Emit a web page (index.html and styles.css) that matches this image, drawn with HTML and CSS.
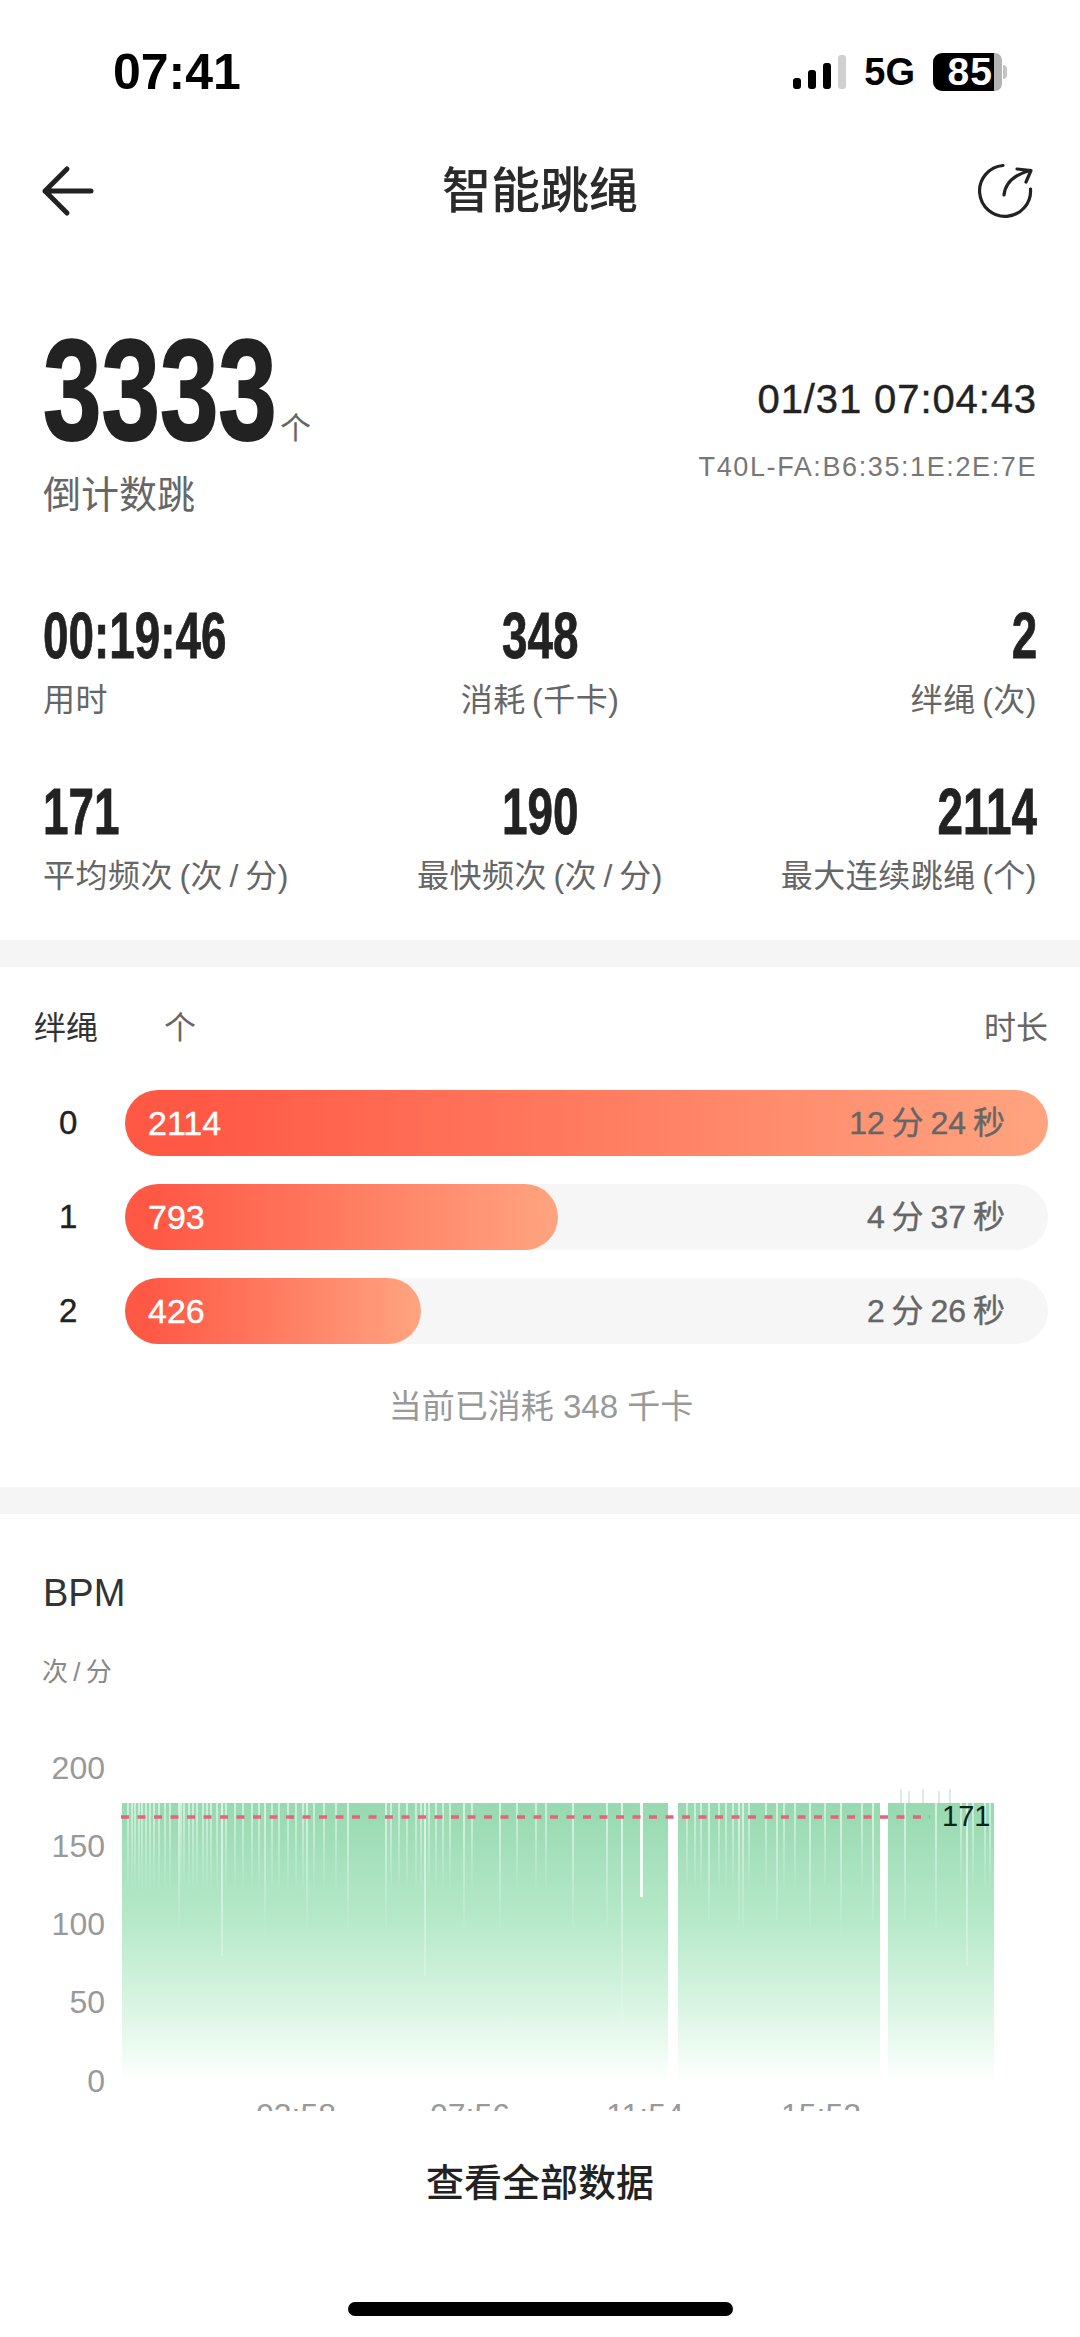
FILE: index.html
```html
<!DOCTYPE html>
<html lang="zh-CN">
<head>
<meta charset="utf-8">
<title>智能跳绳</title>
<link rel="stylesheet" href="styles.css">
</head>
<body>
<div class="page">
  <div class="status">
    <span class="time">07:41</span>
    <div class="status-right">
      <svg class="signal" width="54" height="36" viewBox="0 0 54 36"><rect x="0" y="24" width="8" height="11" rx="3" fill="#000"/><rect x="15" y="16" width="8" height="19" rx="3" fill="#000"/><rect x="30" y="9" width="8" height="26" rx="3" fill="#000"/><rect x="45" y="1" width="8" height="34" rx="3" fill="#d0d0d0"/></svg>
      <span class="net">5G</span>
      <div class="battery"><span class="batt-level">85</span><span class="batt-rest"></span><span class="batt-knob"></span></div>
    </div>
  </div>

  <div class="nav">
    <svg class="nav-icon" width="60" height="60" viewBox="0 0 60 60"><path d="M52 30H6M28 8 6 30l22 22" fill="none" stroke="#222" stroke-width="5" stroke-linecap="round" stroke-linejoin="round"/></svg>
    <span class="nav-title">智能跳绳</span>
    <svg class="nav-icon" width="60" height="60" viewBox="0 0 60 60"><path d="M26 4.500A25.500 25.500 0 1 0 53.500 28" fill="none" stroke="#222" stroke-width="3.2" stroke-linecap="round"/><path d="M27 34Q29 16 53 9.500M40 8l14 1.500L49 21" fill="none" stroke="#222" stroke-width="3.2" stroke-linecap="round" stroke-linejoin="round"/></svg>
  </div>

  <div class="hero">
    <div>
      <div class="hero-count"><span class="big-num">3333</span><span class="hero-unit">个</span></div>
      <div class="hero-label">倒计数跳</div>
    </div>
    <div class="hero-meta">
      <div class="hero-date">01/31 07:04:43</div>
      <div class="hero-device">T40L-FA:B6:35:1E:2E:7E</div>
    </div>
  </div>

  <div class="stats">
    <div class="stat start"><span class="num">00:19:46</span><span class="stat-label">用时</span></div>
    <div class="stat middle"><span class="num">348</span><span class="stat-label">消耗 (千卡)</span></div>
    <div class="stat end"><span class="num">2</span><span class="stat-label">绊绳 (次)</span></div>
    <div class="stat start"><span class="num">171</span><span class="stat-label">平均频次 (次 / 分)</span></div>
    <div class="stat middle"><span class="num">190</span><span class="stat-label">最快频次 (次 / 分)</span></div>
    <div class="stat end"><span class="num">2114</span><span class="stat-label">最大连续跳绳 (个)</span></div>
  </div>

  <div class="divider"></div>

  <div class="rounds">
    <div class="rounds-head">
      <span class="rounds-title">绊绳</span>
      <span class="rounds-unit">个</span>
      <span class="rounds-dur">时长</span>
    </div>
    <div class="round-list">
      <div class="round">
        <span class="round-index">0</span>
        <div class="track"><div class="fill" style="width:100%"><span>2114</span></div><span class="dur">12 分 24 秒</span></div>
      </div>
      <div class="round">
        <span class="round-index">1</span>
        <div class="track"><div class="fill" style="width:46.9%"><span>793</span></div><span class="dur">4 分 37 秒</span></div>
      </div>
      <div class="round">
        <span class="round-index">2</span>
        <div class="track"><div class="fill" style="width:32.1%"><span>426</span></div><span class="dur">2 分 26 秒</span></div>
      </div>
    </div>
    <div class="rounds-foot">当前已消耗 348 千卡</div>
  </div>

  <div class="divider"></div>

  <div class="bpm">
    <div class="bpm-title">BPM</div>
    <div class="bpm-unit">次 / 分</div>
    <svg class="chart" width="1080" height="370" viewBox="0 1740 1080 370">
      <defs>
        <linearGradient id="area" gradientUnits="userSpaceOnUse" x1="0" y1="1802" x2="0" y2="2082">
          <stop offset="0" stop-color="#97d9b0"/>
          <stop offset=".16" stop-color="#a3dfba"/>
          <stop offset=".42" stop-color="#b6e9c9"/>
          <stop offset=".7" stop-color="#d6f4e1"/>
          <stop offset=".88" stop-color="#eefbf2"/>
          <stop offset="1" stop-color="#fff"/>
        </linearGradient>
        <linearGradient id="shortfade" gradientUnits="userSpaceOnUse" x1="0" y1="1802" x2="0" y2="1892">
          <stop offset="0" stop-color="#fff" stop-opacity=".75"/>
          <stop offset="1" stop-color="#fff" stop-opacity="0"/>
        </linearGradient>
        <linearGradient id="midfade" gradientUnits="userSpaceOnUse" x1="0" y1="1802" x2="0" y2="1935">
          <stop offset="0" stop-color="#fff" stop-opacity=".85"/>
          <stop offset="1" stop-color="#fff" stop-opacity="0"/>
        </linearGradient>
        <linearGradient id="longfade" gradientUnits="userSpaceOnUse" x1="0" y1="1802" x2="0" y2="2040">
          <stop offset="0" stop-color="#fff" stop-opacity=".9"/>
          <stop offset="1" stop-color="#fff" stop-opacity="0"/>
        </linearGradient>
      </defs>
      <g class="axis-y">
        <text x="105" y="1778">200</text>
        <text x="105" y="1856">150</text>
        <text x="105" y="1934">100</text>
        <text x="105" y="2012">50</text>
        <text x="105" y="2091">0</text>
      </g>
      <g class="spikes"><path d="M901 1788V1802M909 1790V1802M923 1788V1802M939 1790V1802M950 1788V1802"/></g>
      <path d="M122 1802H668V2082H122ZM678 1802H880V2082H678ZM888 1802H994V2082H888Z" fill="url(#area)"/>
      <path class="gap-short" d="M128 1802V1890M132 1802V1890M135 1802V1890M139 1802V1890M142 1802V1890M146 1802V1890M150 1802V1890M154 1802V1890M159 1802V1890M165 1802V1890M170 1802V1890M181 1802V1890M184 1802V1890M189 1802V1890M193 1802V1890M197 1802V1890M203 1802V1890M207 1802V1890M211 1802V1890M217 1802V1890M226 1802V1890M235 1802V1890M243 1802V1890M252 1802V1890M259 1802V1890M272 1802V1890M279 1802V1890M288 1802V1890M296 1802V1890M303 1802V1890M314 1802V1890M324 1802V1890M336 1802V1890M391 1802V1890M399 1802V1890M407 1802V1890M416 1802V1890M421 1802V1890M429 1802V1890M436 1802V1890M443 1802V1890M450 1802V1890M472 1802V1890M517 1802V1890M536 1802V1890M546 1802V1890M687 1802V1890M695 1802V1890M701 1802V1890M719 1802V1890M726 1802V1890M733 1802V1890M749 1802V1890M766 1802V1890M784 1802V1890M795 1802V1890M825 1802V1890M862 1802V1890M961 1802V1890M973 1802V1890M985 1802V1890M990 1802V1890"/>
      <path class="gap-mid" d="M179 1802V1925M265 1802V1935M307 1802V1925M348 1802V1930M386 1802V1925M464 1802V1925M500 1802V1930M573 1802V1925M607 1802V1925M709 1802V1920M739 1802V1920M743 1802V1925M777 1802V1920M810 1802V1925M841 1802V1935M873 1802V1920M905 1802V1920M936 1802V1930"/>
      <path class="gap-long" d="M222 1802V1955M425 1802V1975M622 1802V2030M967 1802V1965"/>
      <rect class="gap-solid" x="640" y="1802" width="3" height="94"/>
      <line class="mean-line" x1="121" y1="1816" x2="930" y2="1816"/>
      <text class="mean-label" x="942" y="1825">171</text>
      <g class="axis-x">
        <text x="296" y="2125">03:58</text>
        <text x="470" y="2125">07:56</text>
        <text x="645" y="2125">11:54</text>
        <text x="821" y="2125">15:52</text>
      </g>
    </svg>
  </div>

  <div class="view-all">查看全部数据</div>
  <div class="home-bar"></div>
</div>
</body>
</html>
```
FILE: styles.css
```css
* { box-sizing: border-box; }
html, body { margin: 0; padding: 0; background: #fff; }
body { font-family: "Liberation Sans", "Noto Sans CJK SC", sans-serif; color: #222; }
.page { width: 1080px; height: 2337px; overflow: hidden; }

.status { height: 144px; padding: 0 73px 0 113px; display: flex; justify-content: space-between; align-items: center; }
.time { font-size: 50px; font-weight: 700; color: #000; line-height: 1; }
.status-right { display: flex; align-items: center; }
.signal { display: block; margin-right: 17px; }
.net { font-size: 38px; font-weight: 700; color: #000; line-height: 1; margin-right: 18px; }
.battery { display: flex; align-items: center; height: 38px; }
.batt-level { width: 61px; height: 38px; background: #000; color: #fff; font-size: 39px; font-weight: 700; line-height: 38px; text-align: right; letter-spacing: 1px; border-radius: 9px 0 0 9px; padding-right: 1px; }
.batt-rest { width: 8px; height: 38px; background: #b4b4b4; border-radius: 0 7px 7px 0; }
.batt-knob { width: 4px; height: 14px; background: #c4c4c4; border-radius: 0 4px 4px 0; margin-left: 1px; }

.nav { height: 94px; padding: 0 43px 0 39px; display: flex; justify-content: space-between; align-items: center; }
.nav-icon { display: block; }
.nav-title { margin-left: 4px; font-size: 49px; font-weight: 500; line-height: 60px; color: #2a2a2a; }

.hero { padding: 87px 43px 0; display: flex; justify-content: space-between; align-items: flex-start; }
.hero-count { display: flex; align-items: flex-end; height: 130px; }
.big-num { font-weight: 700; font-size: 143px; line-height: 130px; width: 237px; display: inline-block; white-space: nowrap; transform: scaleX(.735); transform-origin: left center; color: #222; -webkit-text-stroke: 2px #222; }
.hero-unit { font-size: 31px; line-height: 44px; color: #666; margin-bottom: 4px; }
.hero-label { margin-top: 15px; font-size: 38px; line-height: 50px; color: #666; }
.hero-meta { text-align: right; padding-top: 54px; }
.hero-date { font-size: 40px; line-height: 40px; color: #222; letter-spacing: .9px; -webkit-text-stroke: .4px #222; }
.hero-device { margin-top: 28px; font-size: 27px; line-height: 40px; color: #777; letter-spacing: 1.6px; }

.stats { padding: 86px 43px 42px; display: grid; grid-template-columns: 1fr 1fr 1fr; row-gap: 60px; }
.stat { display: flex; flex-direction: column; }
.stat.start { align-items: flex-start; }
.stat.middle { align-items: center; }
.stat.end { align-items: flex-end; }
.num { font-weight: 700; font-size: 65px; line-height: 60px; transform: scaleX(.705); color: #222; -webkit-text-stroke: .8px #222; }
.stat.start .num { transform-origin: left center; }
.stat.end .num { transform-origin: right center; }
.stat-label { margin-top: 12px; font-size: 32px; line-height: 44px; color: #666; white-space: nowrap; letter-spacing: .5px; word-spacing: -3px; }

.divider { height: 27px; background: #f5f5f5; }

.rounds { padding: 39px 32px 58px 34px; }
.rounds-head { display: flex; font-size: 32px; line-height: 44px; }
.rounds-title { color: #333; width: 130px; }
.rounds-unit { color: #666; flex: 1; }
.rounds-dur { color: #666; }
.round-list { margin-top: 40px; display: flex; flex-direction: column; gap: 28px; }
.round { display: flex; align-items: center; }
.round-index { width: 91px; padding-left: 25px; font-size: 33px; color: #222; -webkit-text-stroke: .4px #222; }
.track { position: relative; flex: 1; height: 66px; border-radius: 33px; background: #f6f6f6; }
.fill { height: 66px; border-radius: 33px; background: linear-gradient(90deg, #ff5946 8%, #ffa480); color: #fff; font-size: 34px; line-height: 66px; padding-left: 23px; -webkit-text-stroke: .4px #fff; }
.dur { position: absolute; right: 43px; top: 0; line-height: 66px; font-size: 32px; color: #666; white-space: nowrap; word-spacing: -2px; -webkit-text-stroke: .4px #666; }
.rounds-foot { margin-top: 41px; text-align: center; font-size: 33px; line-height: 44px; color: #999; }

.bpm { padding-top: 54px; }
.bpm-title { padding-left: 43px; font-size: 38px; line-height: 50px; color: #333; }
.bpm-unit { margin-top: 34px; padding-left: 42px; font-size: 26px; line-height: 40px; color: #888; word-spacing: -2px; }
.chart { display: block; margin-top: 49px; }
.axis-y text { font-size: 32px; fill: #999; text-anchor: end; }
.axis-x text { font-size: 32px; fill: #999; text-anchor: middle; }
.spikes path { stroke: #bcd6c6; stroke-width: 1; fill: none; }
.gap-short { stroke: url(#shortfade); stroke-width: 1.5; fill: none; }
.gap-mid { stroke: url(#midfade); stroke-width: 1.5; fill: none; }
.gap-long { stroke: url(#longfade); stroke-width: 1.5; fill: none; }
.gap-solid { fill: #f4fbf6; }
.mean-line { stroke: #e8627c; stroke-width: 3.5; stroke-dasharray: 8 8.5; }
.mean-label { font-size: 29px; fill: #12241a; }

.view-all { margin-top: 47px; text-align: center; font-size: 38px; font-weight: 500; line-height: 50px; color: #222; }
.home-bar { margin: 94px auto 0; width: 385px; height: 14px; border-radius: 7px; background: #000; }
```
